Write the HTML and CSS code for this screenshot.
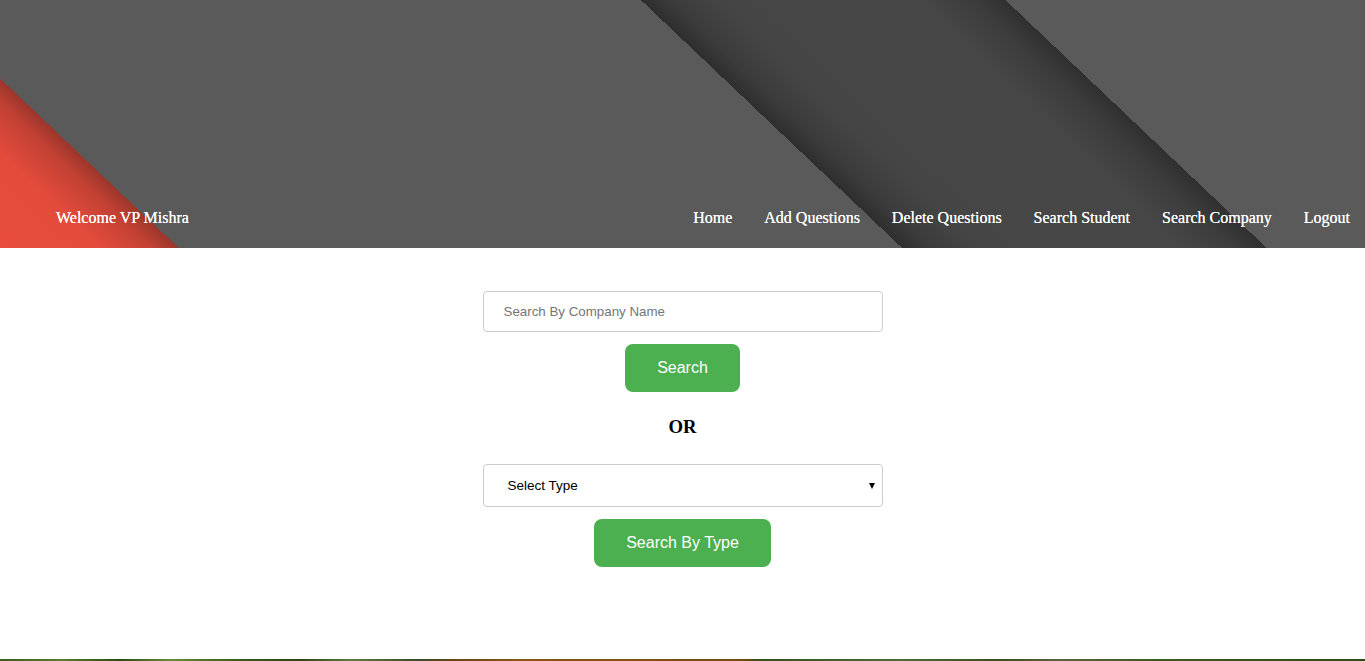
FILE: index.html
```html
<!DOCTYPE html>
<html lang="en">
<head>
<meta charset="utf-8">
<title>Search Company</title>
<link rel="stylesheet" href="styles.css">
</head>
<body>
<header class="site-header">
  <nav class="nav">
    <span class="welcome">Welcome VP Mishra</span>
    <ul class="nav-links">
      <li><a href="#">Home</a></li>
      <li><a href="#">Add Questions</a></li>
      <li><a href="#">Delete Questions</a></li>
      <li><a href="#">Search Student</a></li>
      <li><a href="#">Search Company</a></li>
      <li><a href="#">Logout</a></li>
    </ul>
  </nav>
</header>
<main class="main">
  <form class="search-form">
    <input class="field" type="text" placeholder="Search By Company Name">
    <button class="btn" type="button">Search</button>
    <h3 class="or">OR</h3>
    <div class="select-wrap">
      <select class="field select">
        <option>Select Type</option>
      </select>
    </div>
    <button class="btn" type="button">Search By Type</button>
  </form>
</main>
<footer class="footer"></footer>
</body>
</html>
```
FILE: styles.css
```css
html, body {
  margin: 0;
  padding: 0;
}
body {
  background: #fff;
  font-family: "Liberation Serif", "Times New Roman", serif;
  height: 661px;
  overflow: hidden;
}
.site-header {
  height: 248px;
  display: flex;
  flex-direction: column;
  justify-content: flex-end;
  background: linear-gradient(43.5deg,
    #e84d3d 0px, #e34b3b 70px, #c24134 105px, #9c362b 123px,
    #5a5a5a 123px, #5a5a5a 621px,
    #2e2e2e 621px, #3b3b3b 640px, #444 670px, #474747 720px,
    #464646 815px, #3c3c3c 850px, #303030 872px,
    #5a5a5a 872px);
}
.nav {
  display: flex;
  align-items: center;
  justify-content: space-between;
  padding: 0 15px 20px 56px;
  line-height: 20px;
  font-size: 16px;
  color: #fff;
  text-shadow: 0 0 0.4px #fff;
}
.welcome {
  color: #fff;
}
.nav-links {
  list-style: none;
  margin: 0;
  padding: 0;
  display: flex;
  gap: 32px;
}
.nav-links a {
  color: #fff;
  text-decoration: none;
}
.main {
  height: 411px;
  display: flex;
  justify-content: center;
}
.search-form {
  width: 400px;
  margin-top: 43px;
  display: flex;
  flex-direction: column;
  align-items: center;
}
.field {
  box-sizing: border-box;
  width: 400px;
  height: 41px;
  border: 1px solid #ccc;
  border-radius: 4px;
  padding: 0 20px;
  font-family: "Liberation Sans", Arial, sans-serif;
  font-size: 13.333px;
  color: #000;
  background: #fff;
  outline: none;
}
.field::placeholder {
  color: #757575;
}
.select-wrap {
  position: relative;
  width: 400px;
}
.select {
  height: 43px;
  padding: 0 24px;
  font-size: 13.5px;
  appearance: none;
  -webkit-appearance: none;
}
.select-wrap::after {
  content: "";
  position: absolute;
  right: 8px;
  top: 19px;
  border-left: 3.5px solid transparent;
  border-right: 3.5px solid transparent;
  border-top: 6px solid #000;
  pointer-events: none;
}
.btn {
  margin-top: 12px;
  background: #4caf50;
  color: #fff;
  border: none;
  border-radius: 8px;
  padding: 14px 32px;
  line-height: 20px;
  font-family: "Liberation Sans", Arial, sans-serif;
  font-size: 16px;
  cursor: pointer;
}
.or {
  margin: 24px 0 26px;
  font-size: 18.72px;
  line-height: 22px;
  font-weight: bold;
  color: #000;
}
.footer {
  height: 2px;
  background: linear-gradient(90deg,
    #3d5a1e 0, #5a7a30 60px, #2f4a14 120px, #6a8a3a 170px, #3a5a1a 240px,
    #2c4412 300px, #5e7a42 350px, #3a4a28 420px, #6c4418 455px,
    #8a5512 520px, #7a4a10 740px, #36501c 760px, #4d6a38 900px,
    #3a4e20 1000px, #5c6040 1060px, #3e5a22 1150px, #2f4a14 1365px);
}
```
